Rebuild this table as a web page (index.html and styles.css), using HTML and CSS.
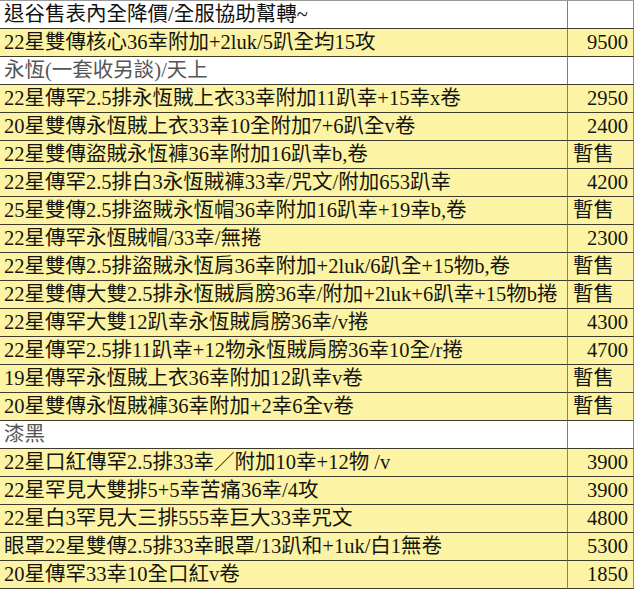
FILE: index.html
```html
<!DOCTYPE html>
<html lang="zh-Hant">
<head>
<meta charset="utf-8">
<title>退谷售表</title>
<link rel="stylesheet" href="styles.css">
</head>
<body>
<div class="sheet">
  <div class="cell title">退谷售表內全降價/全服協助幫轉~</div><div class="cell price title-p"></div>
  <div class="cell item">22星雙傳核心36幸附加+2luk/5趴全均15攻</div><div class="cell price">9500</div>
  <div class="cell section">永恆(一套收另談)/天上</div><div class="cell price section-p"></div>
  <div class="cell item">22星傳罕2.5排永恆賊上衣33幸附加11趴幸+15幸x卷</div><div class="cell price">2950</div>
  <div class="cell item">20星雙傳永恆賊上衣33幸10全附加7+6趴全v卷</div><div class="cell price">2400</div>
  <div class="cell item">22星雙傳盜賊永恆褲36幸附加16趴幸b,卷</div><div class="cell price hold">暫售</div>
  <div class="cell item">22星傳罕2.5排白3永恆賊褲33幸/咒文/附加653趴幸</div><div class="cell price">4200</div>
  <div class="cell item">25星雙傳2.5排盜賊永恆帽36幸附加16趴幸+19幸b,卷</div><div class="cell price hold">暫售</div>
  <div class="cell item">22星傳罕永恆賊帽/33幸/無捲</div><div class="cell price">2300</div>
  <div class="cell item">22星雙傳2.5排盜賊永恆肩36幸附加+2luk/6趴全+15物b,卷</div><div class="cell price hold">暫售</div>
  <div class="cell item">22星雙傳大雙2.5排永恆賊肩膀36幸/附加+2luk+6趴幸+15物b捲</div><div class="cell price hold">暫售</div>
  <div class="cell item">22星傳罕大雙12趴幸永恆賊肩膀36幸/v捲</div><div class="cell price">4300</div>
  <div class="cell item">22星傳罕2.5排11趴幸+12物永恆賊肩膀36幸10全/r捲</div><div class="cell price">4700</div>
  <div class="cell item">19星傳罕永恆賊上衣36幸附加12趴幸v卷</div><div class="cell price hold">暫售</div>
  <div class="cell item">20星雙傳永恆賊褲36幸附加+2幸6全v卷</div><div class="cell price hold">暫售</div>
  <div class="cell section">漆黑</div><div class="cell price section-p"></div>
  <div class="cell item">22星口紅傳罕2.5排33幸／附加10幸+12物 /v</div><div class="cell price">3900</div>
  <div class="cell item">22星罕見大雙排5+5幸苦痛36幸/4攻</div><div class="cell price">3900</div>
  <div class="cell item">22星白3罕見大三排555幸巨大33幸咒文</div><div class="cell price">4800</div>
  <div class="cell item">眼罩22星雙傳2.5排33幸眼罩/13趴和+1uk/白1無卷</div><div class="cell price">5300</div>
  <div class="cell item">20星傳罕33幸10全口紅v卷</div><div class="cell price">1850</div>
</div>
</body>
</html>
```

FILE: styles.css
```css
html, body {
  margin: 0;
  padding: 0;
  background: #ffffff;
}

.sheet {
  display: grid;
  grid-template-columns: 568px 66px;
  width: 634px;
  border-top: 1px solid #9a9a9a;
  font-family: "Liberation Serif", "Noto Sans CJK TC", serif;
  font-size: 20.5px;
  color: #151510;
}

.cell {
  box-sizing: border-box;
  height: 28px;
  line-height: 27px;
  border-bottom: 1px solid #3d3b2c;
  white-space: nowrap;
  overflow: hidden;
  background: #fcf4a4;
}

.item,
.title,
.section {
  padding-left: 4px;
  border-right: 1px solid #7e7e7e;
}

.price {
  text-align: right;
  padding-right: 5px;
  border-right: 1px solid #8a8a8a;
}

.price.hold {
  text-align: left;
  padding-left: 5px;
  padding-right: 0;
}

.title,
.title-p {
  background: #ffffff;
  color: #111111;
}

.section,
.section-p {
  background: #ffffff;
  color: #555555;
}
```
